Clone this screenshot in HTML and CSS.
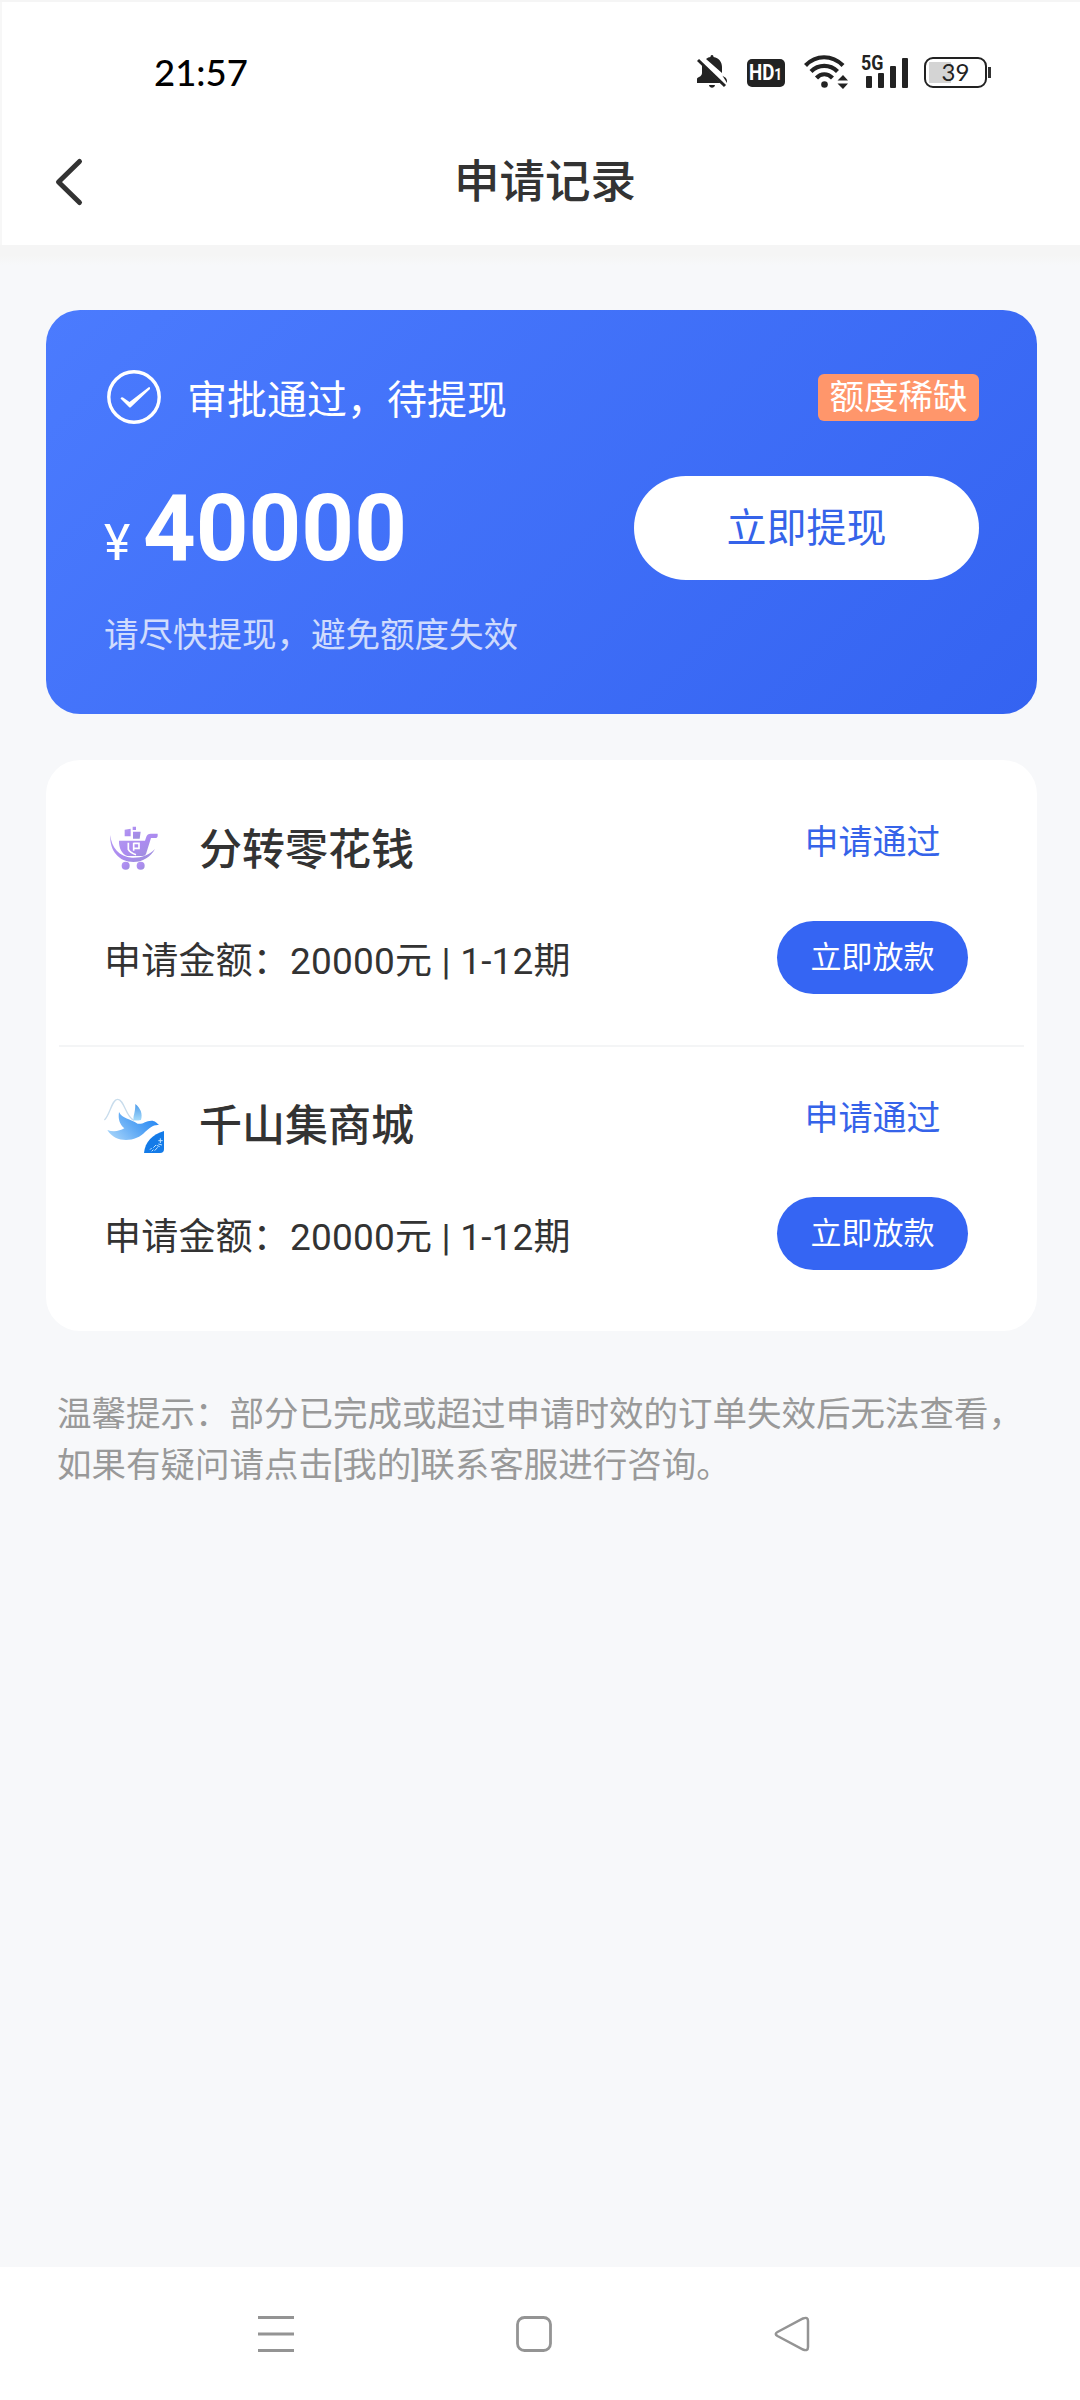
FILE: index.html
```html
<!DOCTYPE html>
<html lang="zh-CN">
<head>
<meta charset="utf-8">
<title>申请记录</title>
<link rel="stylesheet" href="styles.css">
</head>
<body>
<div class="screen">
  <header class="top">
    <div class="status-bar">
      <span class="clock">21:57</span>
      <div class="indicators">
        <svg width="30" height="34" viewBox="0 0 30 34">
          <path d="M15 0C16.300 0 16.500 1 16.500 2C22 3 25 7 25 12V18L9 4C10.500 2.800 12 2.200 13.500 2C13.500 1 13.700 0 15 0ZM5 10L23.500 28H0V24C0 22 5 22 5 18ZM25 20C26 22 30 22 30 26V28Z" fill="#222"/>
          <path d="M1 5L28 31" stroke="#222" stroke-width="3"/>
          <path d="M12 30H18C17.500 33.500 12.500 33.500 12 30Z" fill="#222"/>
        </svg>
        <span class="hd"><span class="hd-label">HD<small>1</small></span></span>
        <svg class="wifi" width="44" height="34" viewBox="0 0 44 34">
          <g fill="none" stroke="#222" stroke-width="4.200">
            <path d="M1.500 10.500C12 -.5 28 -.5 39 10.500"/>
            <path d="M7 16.500C14.500 9 26 9 33.500 16.500"/>
            <path d="M12.500 23C17 18 23.500 18 28.500 23"/>
          </g>
          <circle cx="20.500" cy="29.500" r="3.300" fill="#222"/>
          <path d="M33.500 25.500L39 20L44 25.500ZM33.500 28.500H44L39 34Z" fill="#222"/>
        </svg>
        <div class="signal">
          <svg width="46" height="34" viewBox="0 0 46 34" fill="#222">
            <rect x="4" y="21" width="6" height="12" rx="1"/>
            <rect x="16" y="18" width="6" height="15" rx="1"/>
            <rect x="28" y="11" width="6" height="22" rx="1"/>
            <rect x="40" y="3" width="6" height="30" rx="1"/>
          </svg>
          <span class="net">5G</span>
        </div>
        <div class="battery"><span class="level">39</span></div>
      </div>
    </div>
    <nav class="title-bar">
      <svg class="back" width="30" height="50" viewBox="0 0 30 50"><path d="M25.500 4.500L4.500 25L25.500 45.500" fill="none" stroke="#333" stroke-width="5" stroke-linecap="round" stroke-linejoin="round"/></svg>
      <h1>申请记录</h1>
    </nav>
  </header>

  <main>
    <section class="hero">
      <div class="hero-head">
        <svg width="54" height="54" viewBox="0 0 54 54">
          <circle cx="27" cy="27" r="25.200" fill="none" stroke="#fff" stroke-width="3.400"/>
          <path d="M13.500 28.500Q14.500 26.500 16 27.500L22.500 32L42 17Q43.500 17 43 19L23.500 37.500H22.500Z" fill="#fff"/>
        </svg>
        <span class="state">审批通过，待提现</span>
        <span class="badge">额度稀缺</span>
      </div>
      <div class="hero-main">
        <div class="amount"><span class="yen">¥</span><strong>40000</strong></div>
        <button class="withdraw">立即提现</button>
      </div>
      <p class="hint">请尽快提现，避免额度失效</p>
    </section>

    <section class="list">
      <article class="entry">
        <div class="info">
          <div class="shop">
            <svg width="60" height="60" viewBox="42 51 180 180">
              <defs><linearGradient id="cart" x1="0" x2="1" y1="0" y2="1"><stop stop-color="#b49bf0"/><stop offset=".5" stop-color="#ac8bf0"/><stop offset="1" stop-color="#9a91d8"/></linearGradient></defs>
              <g fill="url(#cart)">
                <path d="M61 105C64 142 88 171 126 173C154 174 178 165 195 147C181 172 158 186 130 186C87 186 58 152 61 105Z"/>
                <path d="M87 122H165L169 110Q172 101 182 101H203V107Q203 114 195 114H183L168 162Q166 168 158 168H112C96 163 86 143 87 122Z"/>
                <path d="M104 89L122 86V109H104ZM128 80H138V90H128ZM129 95H152L149 116H129Z"/>
                <circle cx="107" cy="197" r="12"/><circle cx="152" cy="197" r="12"/>
              </g>
              <path d="M115 128V148Q120 158 138 164M131 130H147V145H131M131 128V152" fill="none" stroke="#fff" stroke-width="5"/>
            </svg>
            <h2>分转零花钱</h2>
          </div>
          <p class="detail">申请金额：20000元 | 1-12期</p>
        </div>
        <div class="action">
          <span class="result">申请通过</span>
          <button class="loan">立即放款</button>
        </div>
      </article>
      <article class="entry">
        <div class="info">
          <div class="shop">
            <svg width="60" height="60" viewBox="42 38 180 180">
              <defs>
                <linearGradient id="bird" x1="0" x2="1" y1=".8" y2=".3"><stop stop-color="#a6d4fa"/><stop offset=".5" stop-color="#60aaf5"/><stop offset="1" stop-color="#2587f4"/></linearGradient>
                <linearGradient id="wing" x1="0" x2="0" y1="0" y2="1"><stop stop-color="#4d9bea"/><stop offset="1" stop-color="#a7dcfb"/></linearGradient>
              </defs>
              <path d="M43 119C60 105 65 57 83 57C103 57 107 111 132 120" fill="none" stroke="#c8dcec" stroke-width="4"/>
              <path d="M136 71C151 83 159 100 153 119C145 120 138 122 131 120C128 108 136 99 136 71Z" fill="url(#wing)"/>
              <path d="M87 95C96 115 121 115 143 130C158 133 167 121 184 121C196 121 200 128 207 134C190 132 178 143 165 155C140 184 78 192 52 149C71 156 89 152 103 144C88 131 84 116 87 95Z" fill="url(#bird)"/>
              <path d="M222 152V205Q222 218 210 218H162C165 184 188 162 222 152Z" fill="#147be8"/>
              <path d="M180 208L185 203M185 213L190 208M190 202L198 194M194 211L203 201M200 195L209 199M211 174V188M205 181H218M205 191L216 194" stroke="#bfe3ff" stroke-width="3" fill="none"/>
            </svg>
            <h2>千山集商城</h2>
          </div>
          <p class="detail">申请金额：20000元 | 1-12期</p>
        </div>
        <div class="action">
          <span class="result">申请通过</span>
          <button class="loan">立即放款</button>
        </div>
      </article>
    </section>

    <p class="tips">温馨提示：部分已完成或超过申请时效的订单失效后无法查看，<br>如果有疑问请点击[我的]联系客服进行咨询。</p>
  </main>

  <footer class="system-nav">
    <svg width="36" height="36" viewBox="0 0 36 36"><path d="M0 1.500H36M0 18H36M0 34.500H36" stroke="#949494" stroke-width="3"/></svg>
    <svg width="36" height="36" viewBox="0 0 36 36"><rect x="1.500" y="1.500" width="33" height="33" rx="7" fill="none" stroke="#949494" stroke-width="2.800"/></svg>
    <svg width="36" height="36" viewBox="0 0 36 36"><path d="M3.500 16L29 2.500Q34 .5 34 5V31Q34 35.500 29 33.500L3.500 20Q0 18 3.500 16Z" fill="none" stroke="#949494" stroke-width="2.500"/></svg>
  </footer>
</div>
</body>
</html>
```
FILE: styles.css
```css
* { box-sizing: border-box; margin: 0; padding: 0; }

body {
  background: #f7f8fa;
  color: #333;
  font-family: Roboto, "Noto Sans CJK SC", sans-serif;
}

.screen {
  display: flex;
  flex-direction: column;
  width: 1080px;
  height: 2400px;
}

svg { display: block; flex: none; }

button { border: 0; font-family: inherit; }

.top {
  height: 245px;
  background: #fff;
  border-top: 2px solid #f5f5f5;
  box-shadow: inset 2px 0 #f7f7f7;
}

.status-bar {
  display: flex;
  align-items: center;
  justify-content: space-between;
  height: 140px;
  padding: 0 89px 0 154px;
}

.clock {
  color: #000;
  font: 500 36.500px/50px Lato, sans-serif;
}

.indicators { display: flex; align-items: center; }

.hd {
  display: flex;
  justify-content: center;
  width: 38px;
  height: 28px;
  margin: 2px 0 0 20px;
  border-radius: 5px;
  background: #222;
  color: #fff;
}

.hd-label {
  font: bold 22px/28px Roboto, sans-serif;
  transform: scaleX(.85);
}

.hd small { font-size: 16px; }

.wifi { margin-left: 19px; }

.signal { position: relative; margin-left: 14px; }

.net {
  position: absolute;
  left: -1px;
  top: -2px;
  color: #222;
  font: bold 21px/20px Roboto, sans-serif;
  transform: scaleX(.85);
  transform-origin: left;
}

.battery {
  position: relative;
  width: 63px;
  height: 31px;
  margin: 1px 4px 0 16px;
  padding: 2px 3px;
  border: 2.500px solid #222;
  border-radius: 9px;
  background: linear-gradient(#d4d4d4, #d4d4d4) 3px 3px / 22px 21px no-repeat;
  text-align: center;
}

.battery::after {
  content: "";
  position: absolute;
  top: 8px;
  right: -6px;
  width: 3px;
  height: 11px;
  background: #333;
}

.level {
  display: block;
  color: #222;
  font: 24px/21px Lato, sans-serif;
}

.title-bar {
  display: grid;
  grid-template-columns: 56px 1fr 46px;
  align-items: center;
  height: 80px;
}

.back { margin-left: 54px; }

h1 {
  padding-top: 2px;
  font-size: 45.500px;
  font-weight: 500;
  line-height: 60px;
  text-align: center;
}

main {
  flex: 1;
  padding: 65px 43px 0 46px;
  background: linear-gradient(#f5f5f5 10px, #f7f8fa 20px);
}

.hero {
  height: 404px;
  padding: 60px 58px 0;
  border-radius: 34px;
  background: linear-gradient(135deg, #4b7bfe, #3463f1);
  color: #fff;
}

.hero-head {
  display: flex;
  align-items: center;
  height: 54px;
  padding-left: 3px;
}

.state {
  padding-top: 8px;
  margin-left: 26px;
  font-size: 40px;
  line-height: 54px;
}

.badge {
  width: 161px;
  height: 47px;
  margin-left: auto;
  border-radius: 6px;
  background: #ff966b;
  font-size: 34.500px;
  line-height: 46px;
  text-align: center;
}

.hero-main {
  display: flex;
  justify-content: space-between;
  margin-top: 52px;
}

.amount {
  display: flex;
  align-items: baseline;
  padding-top: 1px;
}

.yen { width: 39px; font-size: 50px; }

.amount strong {
  font-size: 92px;
  font-weight: 700;
  line-height: 104px;
}

.withdraw {
  width: 345px;
  height: 104px;
  padding-bottom: 6px;
  border-radius: 52px;
  background: #fff;
  color: #3563e9;
  font-size: 40px;
}

.hint {
  margin-top: 29px;
  font-size: 34.500px;
  line-height: 50px;
  opacity: .75;
}

.list {
  height: 571px;
  margin-top: 46px;
  padding: 11px 13px;
  border-radius: 34px;
  background: #fff;
}

.entry {
  display: flex;
  justify-content: space-between;
  height: 276px;
  padding: 43px 56px 0 45px;
}

.entry:first-child { border-bottom: 2px solid #f4f5f6; }

.info { padding-top: 3px; }

.shop {
  display: flex;
  align-items: center;
  gap: 35px;
  height: 60px;
}

h2 {
  padding-top: 6px;
  font-size: 43px;
  font-weight: 500;
  line-height: 60px;
}

.detail {
  margin-top: 60px;
  font-size: 37px;
  line-height: 50px;
  letter-spacing: .2px;
}

.action {
  display: flex;
  flex-direction: column;
  align-items: center;
  gap: 54px;
  padding-top: 3px;
}

.result {
  color: #3563e9;
  font-size: 34px;
  line-height: 50px;
}

.loan {
  width: 191px;
  height: 73px;
  padding-bottom: 7px;
  border-radius: 37px;
  background: #3565f3;
  color: #fff;
  font-size: 31px;
}

.tips {
  margin-top: 58px;
  padding-left: 11px;
  color: #999;
  font-size: 34.500px;
  line-height: 51px;
  white-space: nowrap;
}

.system-nav {
  display: flex;
  justify-content: space-between;
  height: 133px;
  padding: 49px 270px 0 258px;
  background: #fff;
}
```
